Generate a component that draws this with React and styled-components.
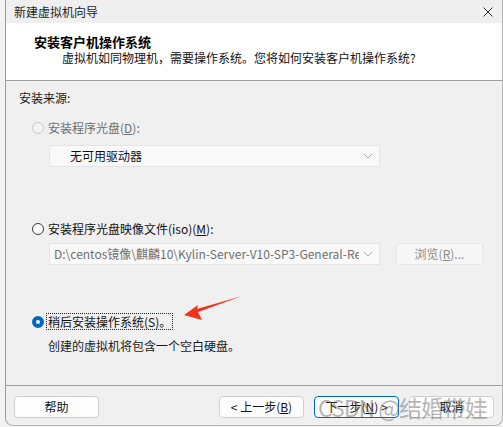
import React from "react";
import styled, { createGlobalStyle } from "styled-components";

const GlobalStyle = createGlobalStyle`
  html, body {
    margin: 0;
    padding: 0;
    background: #ececec;
  }
  body {
    font-family: "Noto Sans CJK SC", "Noto Sans", sans-serif;
    font-size: 12px;
    color: #1a1a1a;
  }
`;

const Page = styled.div`
  width: 503px;
  height: 427px;
  overflow: hidden;
  padding-left: 5px;
  box-sizing: border-box;
  background: #f2f2f2;
`;

const Window = styled.div`
  position: relative;
  width: 498px;
  height: 426px;
  box-sizing: border-box;
  border-left: 1px solid #9c9c9c;
  border-right: 1px solid #b4b4b4;
  border-bottom: 1px solid #b4b4b4;
  border-radius: 0 0 8px 8px;
  background: #f0f0f0;
  display: flex;
  flex-direction: column;
  overflow: hidden;
`;

const TitleBar = styled.div`
  height: 23px;
  flex: none;
  display: flex;
  align-items: center;
  justify-content: space-between;
  padding: 0 8px 0 8px;
  background: #efefef;
  line-height: 16px;
  color: #1c1c1c;
`;

const CloseIcon = () => (
  <svg width="12" height="12" viewBox="0 0 12 12">
    <path d="M1.5 1.5 L10.5 10.5 M10.5 1.5 L1.5 10.5" stroke="#333" strokeWidth="1" fill="none" />
  </svg>
);

const Header = styled.div`
  flex: none;
  height: 58px;
  box-sizing: border-box;
  background: #ffffff;
  border-bottom: 1px solid #a0a0a0;
  padding: 11px 0 0 28px;
  line-height: 16px;
`;

const HeaderTitle = styled.div`
  font-size: 13px;
  font-weight: 700;
  color: #000;
`;

const HeaderSub = styled.div`
  padding-left: 28px;
  color: #111;
`;

const Body = styled.div`
  flex: 1;
  display: flex;
  flex-direction: column;
  padding-left: 13px;
  line-height: 16px;
`;

const Block = styled.div`
  margin-top: ${(p) => p.$top}px;
  padding-left: ${(p) => p.$left || 0}px;
`;

const RadioRow = styled.div`
  display: flex;
  align-items: center;
  margin-top: ${(p) => p.$top}px;
  padding-left: 13px;
  gap: 3px;
  color: ${(p) => (p.$disabled ? "#6e6e6e" : "#111")};
`;

const RadioCircle = styled.span`
  width: 12px;
  height: 12px;
  border-radius: 50%;
  box-sizing: border-box;
  flex: none;
  border: ${(p) =>
    p.$checked ? "4px solid #0067c0" : p.$disabled ? "1px solid #c6c6c6" : "1px solid #3a3a3a"};
  background: ${(p) => (p.$disabled ? "#f4f4f4" : "#fff")};
`;

const RadioLabel = styled.span`
  display: inline-block;
  height: 15px;
  line-height: 15px;
  padding: 0 1px;
  outline: ${(p) => (p.$focused ? "1px dotted #222" : "none")};
  outline-offset: 0;
`;

const Accel = styled.span`
  text-decoration: ${(p) => (p.$underline ? "underline" : "none")};
`;

const SelectRow = styled.div`
  display: flex;
  gap: 16px;
  margin-top: ${(p) => p.$top}px;
  padding-left: 30px;
`;

const SelectBox = styled.div`
  width: 331px;
  height: 22px;
  box-sizing: border-box;
  border: 1px solid #e4e4e4;
  background: #f9f9f9;
  display: flex;
  align-items: center;
  padding: 0 6px 0 ${(p) => p.$pad}px;
  color: ${(p) => (p.$muted ? "#6f6f6f" : "#111")};
`;

const SelectText = styled.span`
  flex: 1;
  overflow: hidden;
  white-space: nowrap;
`;

const Chevron = () => (
  <svg width="10" height="6" viewBox="0 0 10 6" style={{ flex: "none", marginLeft: 4 }}>
    <path d="M1 1 L5 5 L9 1" stroke="#a8a8a8" strokeWidth="1" fill="none" />
  </svg>
);

const BrowseButton = styled.div`
  width: 87px;
  height: 22px;
  box-sizing: border-box;
  border: 1px solid #e6e6e6;
  border-radius: 3px;
  background: #f7f7f7;
  color: #8a8a8a;
  display: flex;
  align-items: center;
  justify-content: center;
`;

const Footer = styled.div`
  flex: none;
  height: 40px;
  box-sizing: border-box;
  border-top: 1px solid #a0a0a0;
  display: flex;
  align-items: flex-start;
  padding: 10px 8px 0 8px;
  gap: 10px;
`;

const Button = styled.div`
  width: 85px;
  height: 22px;
  box-sizing: border-box;
  border: 1px solid ${(p) => (p.$primary ? "#0067c0" : "#d0d0d0")};
  border-radius: 4px;
  background: #fdfdfd;
  display: flex;
  align-items: center;
  justify-content: center;
  line-height: 16px;
  color: #111;
  margin-left: ${(p) => p.$push || 0}px;
`;

const Arrow = styled.svg`
  position: absolute;
  left: 168px;
  top: 290px;
  pointer-events: none;
`;

const Watermark = styled.div`
  position: absolute;
  left: 312px;
  top: 393px;
  font-size: 23px;
  line-height: 28px;
  letter-spacing: -1px;
  color: rgba(110, 110, 110, 0.5);
  font-family: "Noto Sans CJK SC", sans-serif;
  pointer-events: none;
  white-space: nowrap;
`;

export default function App() {
  return (
    <>
      <GlobalStyle />
      <Page>
        <Window>
          <TitleBar>
            <span>新建虚拟机向导</span>
            <CloseIcon />
          </TitleBar>
          <Header>
            <HeaderTitle>安装客户机操作系统</HeaderTitle>
            <HeaderSub>虚拟机如同物理机，需要操作系统。您将如何安装客户机操作系统?</HeaderSub>
          </Header>
          <Body>
            <Block $top={9}>安装来源:</Block>
            <RadioRow $top={14} $disabled>
              <RadioCircle $disabled />
              <RadioLabel>
                安装程序光盘(<Accel $underline>D</Accel>):
              </RadioLabel>
            </RadioRow>
            <SelectRow $top={10}>
              <SelectBox $pad={20}>
                <SelectText>无可用驱动器</SelectText>
                <Chevron />
              </SelectBox>
            </SelectRow>
            <RadioRow $top={54}>
              <RadioCircle />
              <RadioLabel>
                安装程序光盘映像文件(iso)(<Accel $underline>M</Accel>):
              </RadioLabel>
            </RadioRow>
            <SelectRow $top={7}>
              <SelectBox $pad={4} $muted>
                <SelectText>D:\centos镜像\麒麟10\Kylin-Server-V10-SP3-General-Release-2303-X86_64.iso</SelectText>
                <Chevron />
              </SelectBox>
              <BrowseButton>
                浏览(<Accel $underline>R</Accel>)...
              </BrowseButton>
            </SelectRow>
            <RadioRow $top={49}>
              <RadioCircle $checked />
              <RadioLabel $focused>稍后安装操作系统(S)。</RadioLabel>
            </RadioRow>
            <Block $top={9} $left={29}>创建的虚拟机将包含一个空白硬盘。</Block>
          </Body>
          <Footer>
            <Button>帮助</Button>
            <Button $push={110}>&lt; 上一步(<Accel $underline>B</Accel>)</Button>
            <Button $primary>下一步(<Accel $underline>N</Accel>) &gt;</Button>
            <Button>取消</Button>
          </Footer>
          <Arrow width="72" height="32" viewBox="0 0 72 32">
            <path d="M10 25 L24 15 L23 19 L68 6 L24 22 L28 30 Z" fill="#f2301c" />
          </Arrow>
          <Watermark>CSDN @结婚带娃</Watermark>
        </Window>
      </Page>
    </>
  );
}
